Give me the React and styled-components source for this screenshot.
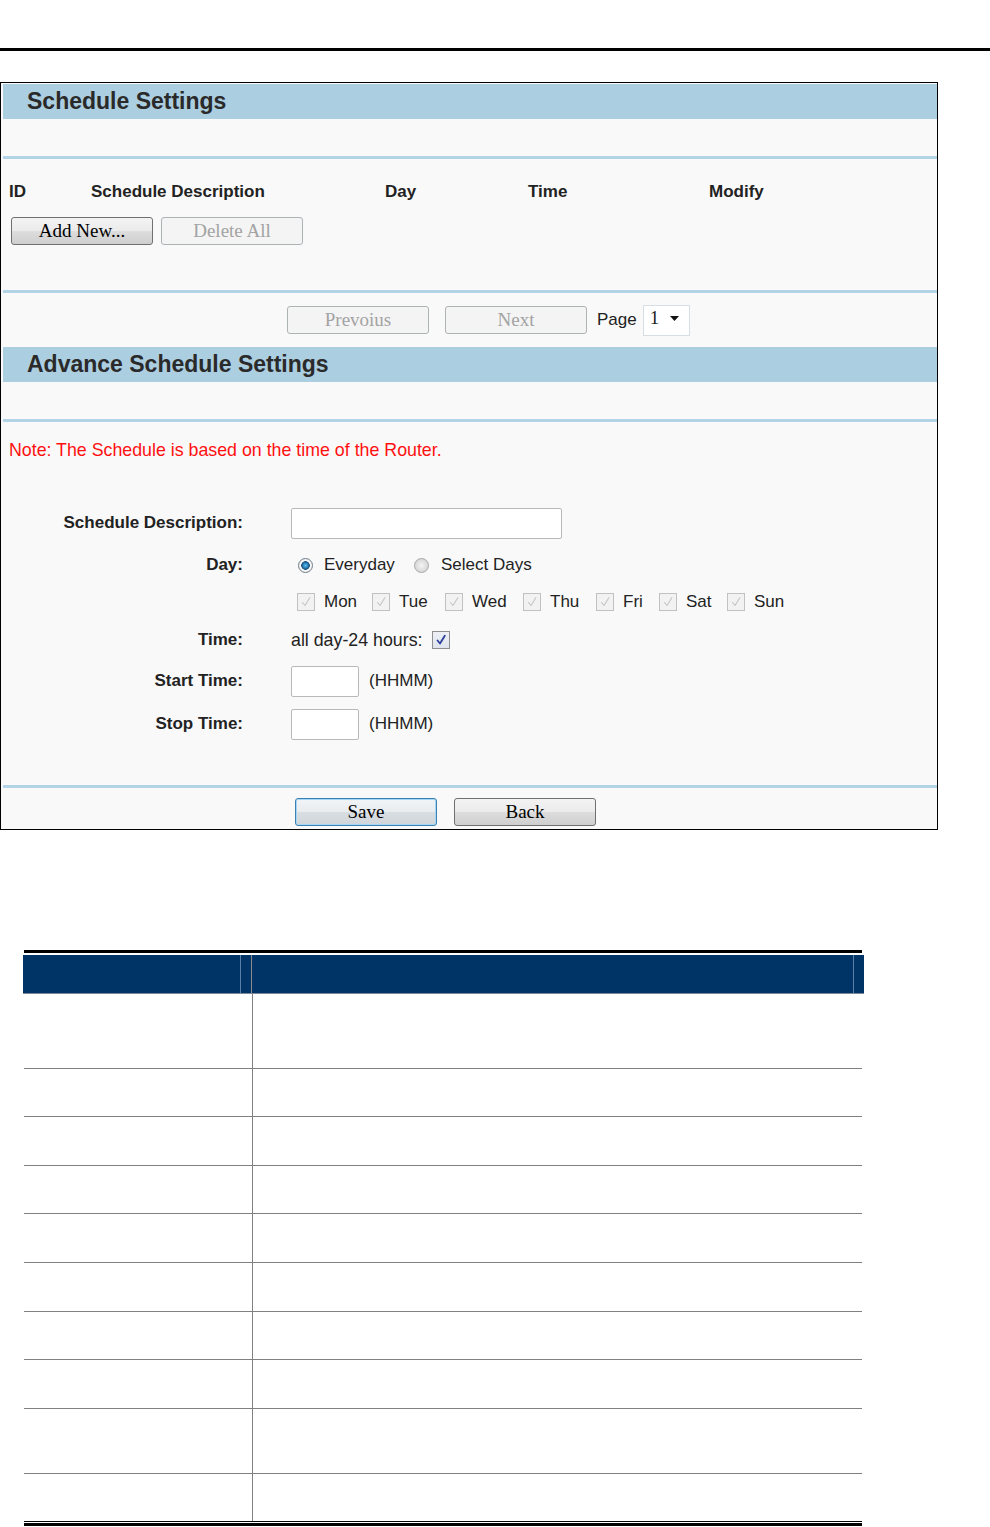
import React from 'react';
import styled, { createGlobalStyle, css } from 'styled-components';

const GlobalStyle = createGlobalStyle`
  body {
    margin: 0;
    background: #fff;
    font-family: "Liberation Sans", Arial, sans-serif;
    color: #222;
  }
`;

const Page = styled.div`
  width: 990px;
  padding-top: 48px;
  padding-bottom: 1px;
`;

const TopRule = styled.div`
  height: 3px;
  background: #000;
`;

const Panel = styled.div`
  box-sizing: border-box;
  width: 938px;
  margin-top: 31px;
  border: 1px solid #000;
  background: #f9f9f9;
`;

const TitleBar = styled.div`
  height: 35px;
  margin: ${p => (p.$first ? '1px' : '0')} 0 0 2px;
  padding-left: 24px;
  display: flex;
  align-items: center;
  background: #acceE1;
  font-size: 23px;
  font-weight: bold;
  color: #2a2a2a;
`;

const Divider = styled.div`
  height: 3px;
  margin: ${p => p.$top || 0}px 0 0 2px;
  background: #b3d3e6;
`;

const HeadRow = styled.div`
  display: grid;
  grid-template-columns: 82px 294px 143px 181px auto;
  padding: 23px 0 0 8px;
  font-size: 17px;
  font-weight: bold;
  line-height: 20px;
`;

const ButtonRow = styled.div`
  display: flex;
  gap: ${p => p.$gap || 8}px;
  align-items: center;
  padding-left: ${p => p.$left || 0}px;
  margin-top: ${p => p.$top || 0}px;
  height: ${p => p.$h || 28}px;
`;

const Button = styled.button`
  box-sizing: border-box;
  width: 142px;
  height: 28px;
  padding: 0;
  border-radius: 3px;
  font-family: "Liberation Serif", "Times New Roman", serif;
  font-size: 19px;
  line-height: 24px;
  border: 1px solid #707070;
  color: #000;
  background: linear-gradient(#f3f3f3 0%, #ebebeb 50%, #dddddd 51%, #cfcfcf 100%);
  ${p =>
    p.disabled &&
    css`
      border-color: #adb2b5;
      color: #a3a3a3;
      background: #f4f4f4;
    `}
  ${p =>
    p.$focus &&
    css`
      border-color: #3c7fb1;
      box-shadow: inset 0 0 0 1px #a6d6f5;
      background: linear-gradient(#f2f4f6 0%, #e8ecef 50%, #d9dee2 51%, #cfd5da 100%);
    `}
`;

const PageLabel = styled.span`
  font-size: 17px;
  margin-left: -6px;
`;

const Select = styled.div`
  box-sizing: border-box;
  width: 47px;
  height: 31px;
  margin-left: -10px;
  display: flex;
  align-items: center;
  justify-content: space-between;
  padding: 0 10px 4px 6px;
  background: #fff;
  border: 1px solid #d6dde3;
  font-family: "Liberation Serif", serif;
  font-size: 19px;
`;

const Note = styled.div`
  margin: 18px 0 0 8px;
  font-size: 17.8px;
  line-height: 20px;
  color: #ff1010;
`;

const Form = styled.div`
  display: grid;
  grid-template-columns: 242px 1fr;
  grid-template-rows: 40px 44px 30px 46px 36px 50px;
  column-gap: 48px;
  margin-top: 43px;
  align-items: center;
  font-size: 17px;
`;

const Label = styled.div`
  text-align: right;
  font-weight: bold;
`;

const Field = styled.div`
  display: flex;
  align-items: center;
  gap: ${p => p.$gap ?? 10}px;
  padding-left: ${p => p.$left || 0}px;
`;

const TextInput = styled.div`
  box-sizing: border-box;
  width: ${p => p.$w}px;
  height: 31px;
  background: #fff;
  border: 1px solid #b9b9b9;
  border-radius: 2px;
`;

const Option = styled.span`
  display: inline-flex;
  align-items: center;
  gap: ${p => p.$gap ?? 10}px;
  width: ${p => (p.$w ? `${p.$w}px` : 'auto')};
  font-size: ${p => p.$size || 17}px;
`;

const Radio = styled.span`
  box-sizing: border-box;
  width: 15px;
  height: 15px;
  border-radius: 50%;
  border: 1px solid #8e8f8f;
  background: ${p =>
    p.$checked
      ? 'radial-gradient(circle, #5cc0f0 0, #2a7fb8 2.5px, #164d78 4px, #fff 4.6px, #e8e8e8 7px)'
      : 'radial-gradient(circle, #f4f4f4 0, #e2e2e2 4px, #d6d6d6 7px)'};
  border-color: ${p => (p.$checked ? '#6f7f8c' : '#a8a8a8')};
`;

const Box = styled.span`
  box-sizing: border-box;
  width: 18px;
  height: 18px;
  display: inline-flex;
  align-items: center;
  justify-content: center;
  border: 1px solid ${p => (p.$enabled ? '#8f8f8f' : '#c1c1c1')};
  background: ${p => (p.$enabled ? 'linear-gradient(#eef0f6, #dfe3ec)' : '#f2f2f2')};
  svg {
    width: 12px;
    height: 12px;
  }
`;

const Check = ({ enabled }) => (
  <Box $enabled={enabled}>
    <svg viewBox="0 0 12 12" fill="none">
      <path
        d="M2.5 6.5 L5 9.5 L9.8 1.8"
        stroke={enabled ? '#2d3f9a' : '#c4c4c4'}
        strokeWidth={enabled ? 1.8 : 1.1}
        strokeLinecap="round"
        strokeLinejoin="round"
      />
    </svg>
  </Box>
);

const Hint = styled.span`
  font-size: 17px;
`;

const Footer = styled.div`
  height: 41px;
  display: flex;
  gap: 17px;
  padding: 10px 0 0 294px;
  box-sizing: border-box;
`;

const Table = styled.div`
  width: 841px;
  margin: 120px 0 0 23px;
`;

const TableTopRule = styled.div`
  height: 3px;
  margin: 0 2px 2px 1px;
  background: #000;
`;

const TableHead = styled.div`
  display: grid;
  grid-template-columns: 229px 1fr;
  height: 38px;
  border-bottom: 1px solid #7f8a99;
`;

const HeadCell = styled.div`
  background: linear-gradient(
    to right,
    #003366 calc(100% - 11px),
    #5a7fa8 calc(100% - 11px),
    #5a7fa8 calc(100% - 10px),
    #003366 calc(100% - 10px)
  );
  border-right: ${p => (p.$last ? 'none' : '1px solid #8a8a8a')};
`;

const Row = styled.div`
  display: grid;
  grid-template-columns: 229px 1fr;
  height: ${p => p.$h}px;
  margin: 0 2px 0 1px;
  border-bottom: 1px solid ${p => (p.$last ? '#000' : '#808080')};
`;

const Cell = styled.div`
  border-right: ${p => (p.$last ? 'none' : '1px solid #808080')};
`;

const BottomRule = styled.div`
  height: 3px;
  margin: 1px 2px 0 1px;
  background: #000;
`;

const rowHeights = [74, 47, 48, 47, 48, 48, 47, 48, 64, 47];
const days = ['Mon', 'Tue', 'Wed', 'Thu', 'Fri', 'Sat', 'Sun'];
const dayWidths = [75, 73, 78, 73, 63, 68, 0];

export default function App() {
  return (
    <Page>
      <GlobalStyle />
      <TopRule />
      <Panel>
        <TitleBar $first>Schedule Settings</TitleBar>
        <Divider $top={37} />
        <HeadRow>
          <span>ID</span>
          <span>Schedule Description</span>
          <span>Day</span>
          <span>Time</span>
          <span>Modify</span>
        </HeadRow>
        <ButtonRow $left={10} $top={15}>
          <Button>Add New...</Button>
          <Button disabled>Delete All</Button>
        </ButtonRow>
        <Divider $top={45} />
        <ButtonRow $left={286} $h={54} $gap={16}>
          <Button disabled>Prevoius</Button>
          <Button disabled>Next</Button>
          <PageLabel>Page</PageLabel>
          <Select>
            <span>1</span>
            <svg width="9" height="5" viewBox="0 0 9 5">
              <path d="M0 0 H9 L4.5 5 Z" fill="#111" />
            </svg>
          </Select>
        </ButtonRow>
        <TitleBar>Advance Schedule Settings</TitleBar>
        <Divider $top={37} />
        <Note>Note: The Schedule is based on the time of the Router.</Note>
        <Form>
          <Label>Schedule Description:</Label>
          <Field>
            <TextInput $w={271} />
          </Field>

          <Label>Day:</Label>
          <Field $left={7} $gap={0}>
            <Option $w={116} $gap={11}>
              <Radio $checked />
              Everyday
            </Option>
            <Option $gap={12}>
              <Radio />
              Select Days
            </Option>
          </Field>

          <span />
          <Field $left={6} $gap={0}>
            {days.map((d, i) => (
              <Option key={d} $gap={9} $w={dayWidths[i]}>
                <Check />
                {d}
              </Option>
            ))}
          </Field>

          <Label>Time:</Label>
          <Field $gap={10}>
            <Option $size={17.8}>all day-24 hours:</Option>
            <Check enabled />
          </Field>

          <Label>Start Time:</Label>
          <Field>
            <TextInput $w={68} />
            <Hint>(HHMM)</Hint>
          </Field>

          <Label>Stop Time:</Label>
          <Field>
            <TextInput $w={68} />
            <Hint>(HHMM)</Hint>
          </Field>
        </Form>
        <Divider $top={36} />
        <Footer>
          <Button $focus>Save</Button>
          <Button>Back</Button>
        </Footer>
      </Panel>
      <Table>
        <TableTopRule />
        <TableHead>
          <HeadCell />
          <HeadCell $last />
        </TableHead>
        {rowHeights.map((h, i) => (
          <Row key={i} $h={h} $last={i === rowHeights.length - 1}>
            <Cell />
            <Cell $last />
          </Row>
        ))}
        <BottomRule />
      </Table>
    </Page>
  );
}
